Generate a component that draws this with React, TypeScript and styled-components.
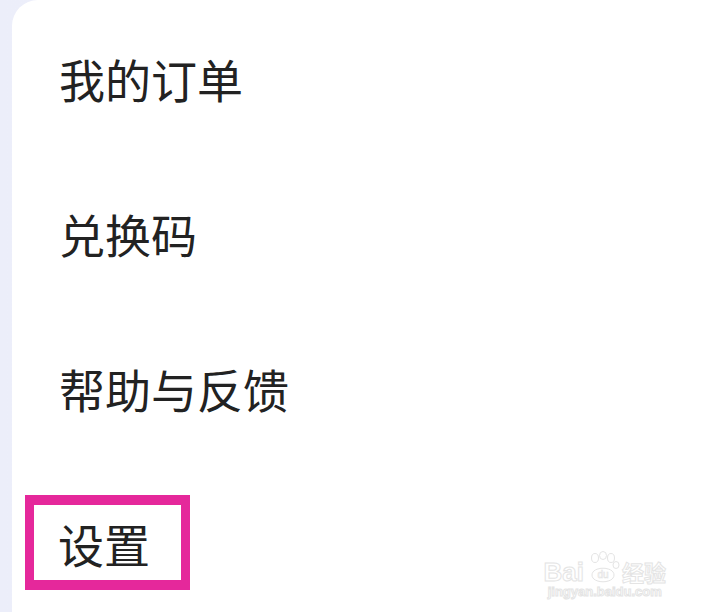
import styled, { createGlobalStyle } from "styled-components";

const GlobalStyle = createGlobalStyle`
    html, body {
        margin: 0;
        padding: 0;
        background: #eef0fb;
    }
    body {
        font-family: "Noto Sans CJK SC", "Noto Sans", sans-serif;
    }
`;

const Page = styled.div`
    width: 708px;
    height: 612px;
    display: flex;
    padding: 0 0 0 12px;
    box-sizing: border-box;
    background: linear-gradient(90deg, #eceefa 0%, #f1f2fb 100%);
    overflow: hidden;
`;

const Card = styled.div`
    flex: 1;
    position: relative;
    background: #ffffff;
    border-top-left-radius: 26px;
    padding: 0 0 0 47px;
    display: flex;
    flex-direction: column;
    overflow: hidden;
`;

const Item = styled.div`
    height: 155px;
    flex-shrink: 0;
    display: flex;
    align-items: center;
`;

const Label = styled.span<{ highlighted?: boolean }>`
    font-size: 46px;
    font-weight: 400;
    line-height: 46px;
    color: #222222;
    ${({ highlighted }) =>
        highlighted &&
        `
        margin-left: -34px;
        padding: 15px 31px 14px 24px;
        border: 9px solid #e5289b;
        border-top-width: 10px;
        border-bottom-width: 10px;
    `}
`;

const Watermark = styled.div`
    position: absolute;
    right: 42px;
    bottom: 14px;
    display: flex;
    flex-direction: column;
    align-items: center;
    opacity: 0.9;
`;

const MarkTop = styled.div`
    display: flex;
    align-items: flex-end;
    gap: 2px;
`;

const MarkText = styled.span<{ size: number }>`
    font-family: "Liberation Sans", Arial, "Noto Sans CJK SC", sans-serif;
    font-size: ${({ size }) => size}px;
    font-weight: 700;
    line-height: 1;
    color: #ffffff;
    -webkit-text-stroke: 1px #e2e2e2;
`;

const Paw = () => (
    <svg width="34" height="34" viewBox="0 0 34 34">
        <g fill="none" stroke="#e2e2e2" strokeWidth="1">
            <ellipse cx="9" cy="7" rx="3.5" ry="4.5" />
            <ellipse cx="17" cy="4.5" rx="3.5" ry="4" />
            <ellipse cx="25" cy="7" rx="3.5" ry="4.5" />
            <ellipse cx="30" cy="14" rx="3" ry="3.5" />
            <path d="M6 24 C6 15 28 15 28 24 C28 33 6 33 6 24 Z" />
        </g>
        <text x="17" y="27" textAnchor="middle" fontSize="10" fontFamily="Liberation Sans, sans-serif" fill="#ffffff" stroke="#e2e2e2" strokeWidth="0.6">du</text>
    </svg>
);

const menu = ["我的订单", "兑换码", "帮助与反馈", "设置"];

const App = () => {
    return (
        <>
            <GlobalStyle />
            <Page>
                <Card>
                    {menu.map((label, i) => (
                        <Item key={label}>
                            <Label highlighted={i === menu.length - 1}>{label}</Label>
                        </Item>
                    ))}
                    <Watermark>
                        <MarkTop>
                            <MarkText size={26}>Bai</MarkText>
                            <Paw />
                            <MarkText size={22}>经验</MarkText>
                        </MarkTop>
                        <MarkText size={13}>jingyan.baidu.com</MarkText>
                    </Watermark>
                </Card>
            </Page>
        </>
    );
};

export default App;
